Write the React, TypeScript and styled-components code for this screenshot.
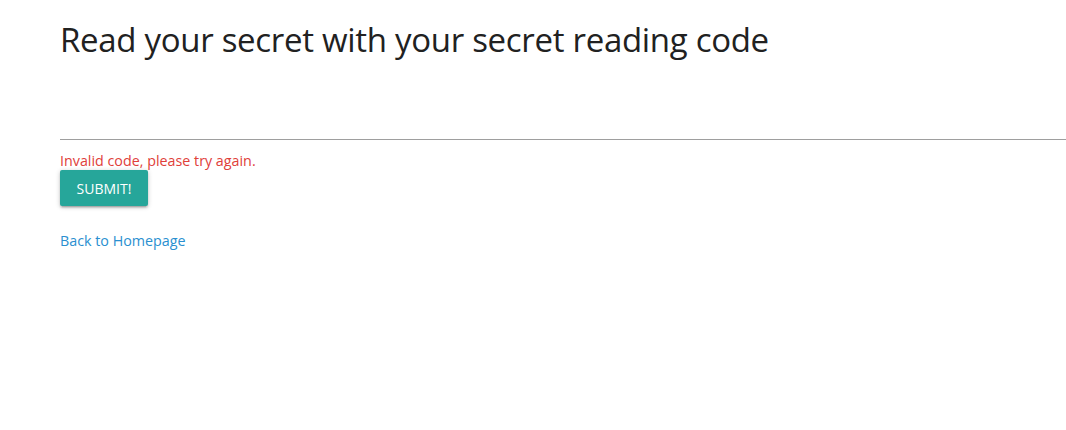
import React from "react";
import styled, { createGlobalStyle } from "styled-components";

const Global = createGlobalStyle`
  html, body { margin: 0; padding: 0; background: #fff; }
  body { font-family: "Open Sans", "Noto Sans", sans-serif; color: rgba(0,0,0,0.87); }
`;

const Page = styled.div`
  padding: 0 0 0 60px;
  display: flex;
  flex-direction: column;
  align-items: flex-start;
`;

const Title = styled.h4`
  font-size: 33px;
  font-weight: 400;
  line-height: 38px;
  margin: 21px 0 0 0;
  color: #212121;
  letter-spacing: -0.3px;
`;

const Field = styled.input`
  box-sizing: border-box;
  width: 100%;
  height: 46px;
  margin-top: 35px;
  border: none;
  border-bottom: 1px solid #9e9e9e;
  outline: none;
  background: transparent;
  font-size: 16px;
  font-family: inherit;
`;

const ErrorText = styled.div`
  color: #e0403a;
  font-size: 14.3px;
  line-height: 18px;
  margin-top: 12px;
`;

const Button = styled.button`
  margin-top: 0;
  height: 36px;
  padding: 0 16.5px;
  border: none;
  border-radius: 2px;
  background: #26a69a;
  color: #fff;
  font-family: inherit;
  font-size: 14px;
  box-shadow: 0 2px 2px 0 rgba(0,0,0,0.14), 0 3px 1px -2px rgba(0,0,0,0.12), 0 1px 5px 0 rgba(0,0,0,0.2);
`;

const Link = styled.a`
  margin-top: 25px;
  color: #2a8fd0;
  font-size: 14.3px;
  text-decoration: none;
`;

export default function App() {
  return (
    <>
      <Global />
      <Page>
        <Title>Read your secret with your secret reading code</Title>
        <Field type="text" />
        <ErrorText>Invalid code, please try again.</ErrorText>
        <Button>SUBMIT!</Button>
        <Link href="#">Back to Homepage</Link>
      </Page>
    </>
  );
}
